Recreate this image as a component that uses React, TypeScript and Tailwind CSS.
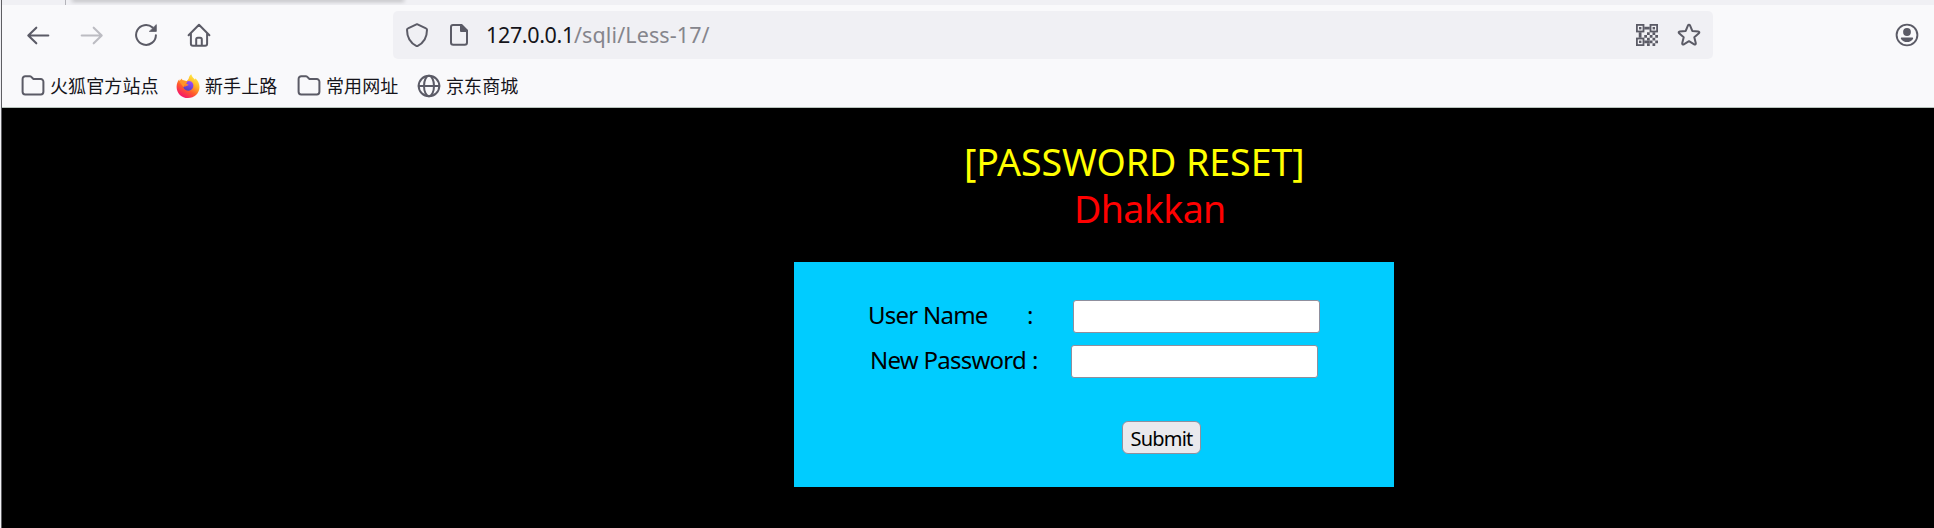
import React from "react";

const stroke = {
  fill: "none",
  stroke: "#5b5b66",
  strokeWidth: 2,
  strokeLinecap: "round" as const,
  strokeLinejoin: "round" as const,
};

function Back() {
  return (
    <svg width="24" height="24" viewBox="0 0 24 24" {...stroke} strokeWidth={2.1}>
      <path d="M22.3 12.5H2.5M10.3 4.7 2.3 12.5l8 7.8" />
    </svg>
  );
}

function Forward() {
  return (
    <svg width="24" height="24" viewBox="0 0 24 24" {...stroke} stroke="#bcbcc2" strokeWidth={2.1}>
      <path d="M1.7 12.5h19.8M13.7 4.7l8 7.8-8 7.8" />
    </svg>
  );
}

function Reload() {
  return (
    <svg width="24" height="24" viewBox="0 0 24 24" {...stroke}>
      <path d="M18.6 4.6A9.9 9.9 0 1 0 21.9 12.2" />
      <path d="M22.3 2v6.4h-6.6z" fill="#5b5b66" strokeWidth={0.8} />
    </svg>
  );
}

function Home() {
  return (
    <svg width="24" height="24" viewBox="0 0 24 24" {...stroke}>
      <path d="M1.6 12.2 12 1.8l10.4 10.4M3.9 10v10.8a2 2 0 0 0 2 2h12.2a2 2 0 0 0 2-2V10M9.2 22.6v-6.2a1.6 1.6 0 0 1 1.6-1.6h2.4a1.6 1.6 0 0 1 1.6 1.6v6.2" />
    </svg>
  );
}

function Shield() {
  return (
    <svg width="24" height="24" viewBox="0 0 24 24" {...stroke}>
      <path d="M12 1.2 21 5.3c.7.3 1 .8 1 1.5C22 14.2 18.8 20.2 12 23.3 5.2 20.2 2 14.2 2 6.8c0-.7.3-1.2 1-1.5z" />
    </svg>
  );
}

function Page() {
  return (
    <svg width="20" height="24" viewBox="0 0 20 24" {...stroke}>
      <path d="M4 2h8.5l5.5 5.5V19.5a2.3 2.3 0 0 1-2.3 2.3H4.3A2.3 2.3 0 0 1 2 19.5V4a2 2 0 0 1 2-2z" />
      <path d="M12 2v6h6z" fill="#5b5b66" />
    </svg>
  );
}

const checks = [
  [4, 3], [6, 3], [3, 4], [5, 4], [7, 4], [4, 5], [6, 5],
  [3, 6], [5, 6], [7, 6], [4, 7], [6, 7], [4, 6], [3, 1], [4, 1], [1, 3], [1, 4],
];

const finders = [
  [0, 0], [13.6, 0], [0, 13.6],
];

function QrCode() {
  return (
    <svg width="22" height="22" viewBox="0 0 22 22">
      {checks.map(([x, y]) => (
        <rect key={`${x}-${y}`} x={x * 2.75} y={y * 2.75} width="2.75" height="2.75" fill="#5b5b66" />
      ))}
      {finders.map(([x, y]) => (
        <g key={`${x}-${y}`}>
          <rect x={x + 0.9} y={y + 0.9} width="6.6" height="6.6" fill="#f0f0f4" stroke="#5b5b66" strokeWidth="1.8" />
          <rect x={x + 3} y={y + 3} width="2.4" height="2.4" fill="#5b5b66" />
        </g>
      ))}
    </svg>
  );
}

function Star() {
  return (
    <svg width="24" height="24" viewBox="0 0 24 24" {...stroke}>
      <path d="M11 2.3c.4-.9 1.6-.9 2 0l2.3 5.6 6 .5c1 .1 1.4 1.2.6 1.9l-4.6 3.9 1.5 6c.2 1-.8 1.7-1.6 1.2L12 18.2l-5.2 3.2c-.8.5-1.8-.2-1.6-1.2l1.5-6-4.6-3.9c-.8-.7-.4-1.8.6-1.9l6-.5z" />
    </svg>
  );
}

function Account() {
  return (
    <svg width="24" height="24" viewBox="0 0 24 24">
      <circle cx="12" cy="12" r="10.4" fill="none" stroke="#5b5b66" strokeWidth="1.9" />
      <circle cx="12" cy="9" r="3.9" fill="#5b5b66" />
      <path d="M6.8 14.5h10.4c.8 0 1.2.7.8 1.4-1.3 2-3.5 3.2-6 3.2s-4.7-1.2-6-3.2c-.4-.7 0-1.4.8-1.4z" fill="#5b5b66" />
    </svg>
  );
}

function Folder() {
  return (
    <svg width="24" height="24" viewBox="0 0 24 24" {...stroke}>
      <path d="M4.2 2.3h4.6c.6 0 1.1.2 1.5.6l1.6 1.6c.4.4.9.6 1.5.6h6.4a2.6 2.6 0 0 1 2.6 2.6v10.1a2.6 2.6 0 0 1-2.6 2.6H4.2a2.6 2.6 0 0 1-2.6-2.6V4.9a2.6 2.6 0 0 1 2.6-2.6z" />
    </svg>
  );
}

function Globe() {
  return (
    <svg width="24" height="24" viewBox="0 0 24 24" {...stroke}>
      <circle cx="12" cy="12" r="10.3" />
      <ellipse cx="12" cy="12" rx="5" ry="10.3" />
      <path d="M1.7 12h20.6" />
    </svg>
  );
}

function Firefox() {
  return (
    <svg width="24" height="24" viewBox="0 0 24 24">
      <defs>
        <linearGradient id="flame" x1="0.8" y1="0.05" x2="0.25" y2="0.95">
          <stop offset="0" stopColor="#fff04a" />
          <stop offset="0.35" stopColor="#ffb224" />
          <stop offset="0.65" stopColor="#ff5a2c" />
          <stop offset="1" stopColor="#f5156c" />
        </linearGradient>
        <linearGradient id="orb" x1="0.7" y1="0" x2="0.3" y2="1">
          <stop offset="0" stopColor="#a04bff" />
          <stop offset="1" stopColor="#4a3fc0" />
        </linearGradient>
      </defs>
      <path d="M15.3.3c.5 2.4 2 3.6 3.5 5.2.4-.2.5-.7.4-1.2C22 6.5 23.6 10 23.5 13.2 23.3 19.4 18.3 24 12 24 5.6 24 .6 19.1.6 12.9c0-3 1-5.7 2.7-7.6 0 .8.1 1.3.4 1.8C4.3 6 5.1 5.1 6 4.6c0 .9.3 1.6.8 2 1.5-.4 2.8-.2 3.9.5 1-.8 1.7-1.5 2-2.5.3-1.8 1.2-3.3 2.6-4.3z" fill="url(#flame)" />
      <path d="M11 7.4c1.3-.8 3.3-.7 4.6.4 1.7 1.4 2.2 3.4 1.5 5.5-.8 2.2-2.7 3.5-5 3.5-2.8 0-4.9-2-5-4.7 1 .8 2.3.7 3.3 0 .8-.5 1.8-.5 2.2-1 .2-.7-.8-1-2-1.2-.6-.8-.5-1.7.4-2.5z" fill="url(#orb)" />
      <path d="M3.4 7.6c1.8-1.4 4-1.7 5.6-.4.6.5 1.5.5 2.3.5-.2 1.2-1.8 1.7-2 2.9-1.2.5-1.7 1.6-1.3 2.9-1.6-1.6-2.8-3.5-4.6-5.9z" fill="#ff9428" />
    </svg>
  );
}

function Bookmark({ icon, label, className }: { icon: React.ReactNode; label: string; className: string }) {
  return (
    <a className={`flex shrink-0 items-center gap-[5px] ${className}`}>
      {icon}
      <span className="text-[18px] leading-6 tracking-[0.1px] whitespace-nowrap text-[#15141a]">{label}</span>
    </a>
  );
}

function Toolbar() {
  return (
    <div className="flex h-[60px] items-center">
      <div className="flex w-[391px] shrink-0 items-center gap-[30px] pb-px pl-[24px]">
        <Back />
        <Forward />
        <Reload />
        <div className="-ml-px">
          <Home />
        </div>
      </div>
      <div className="flex h-12 w-[1320px] shrink-0 items-center rounded-[5px] bg-[#f0f0f4] pl-3">
        <Shield />
        <div className="ml-5 flex">
          <Page />
        </div>
        <div className="ml-[17px] text-[21.5px] leading-8 tracking-[0.12px] text-[#85858c]">
          <span className="tracking-[-0.35px] text-[#15141a]">127.0.0.1</span>/sqli/Less-17/
        </div>
        <div className="mr-3 ml-auto flex items-center gap-[19px]">
          <QrCode />
          <Star />
        </div>
      </div>
      <div className="ml-[182px] flex">
        <Account />
      </div>
    </div>
  );
}

function Bookmarks() {
  return (
    <div className="flex h-[42px] items-center pl-[19px]">
      <Bookmark className="w-[155px]" icon={<Folder />} label="火狐官方站点" />
      <Bookmark className="w-[121px]" icon={<Firefox />} label="新手上路" />
      <Bookmark className="w-[120px]" icon={<Folder />} label="常用网址" />
      <Bookmark className="w-[120px]" icon={<Globe />} label="京东商城" />
    </div>
  );
}

export default function App() {
  return (
    <div className="flex h-[528px] w-[1934px] overflow-hidden bg-black font-['Noto_Sans','Noto_Sans_CJK_SC',sans-serif]">
      <div className="w-[2px] shrink-0 border-r border-[#5f5f63] bg-[#f0f0f4]" />
      <div className="flex min-w-0 flex-1 flex-col">
        <div className="flex h-[5px] shrink-0 overflow-hidden bg-[#f0f0f4]">
          <div className="w-[64px] border-r border-[#b4b4ba]" />
          <div className="ml-[7px] h-0 w-[330px] rounded-b-md shadow-[0_0_4px_1px_rgba(0,0,0,0.4)]" />
        </div>
        <header className="h-[103px] shrink-0 border-b border-[#b9c4bd] bg-[#f9f9fb]">
          <Toolbar />
          <Bookmarks />
        </header>
        <main className="flex flex-1 flex-col bg-black">
          <div className="flex h-[154px] flex-col pt-[30px] text-[37.5px] leading-[47px] whitespace-nowrap">
            <h1 className="pl-[962px] tracking-[-0.05px] text-[#ffff00]">[PASSWORD RESET]</h1>
            <h2 className="pl-[1072px] tracking-[-0.6px] text-[#ff0000]">Dhakkan</h2>
          </div>
          <form className="ml-[792px] h-[225px] w-[600px] bg-[#00ccff] pt-[38px] text-[24px] whitespace-nowrap text-black">
            <div className="flex h-[33px] items-center pl-[74px]">
              <label className="w-[159px] pb-[3px] tracking-[-0.75px]">User Name</label>
              <span className="w-[46px] pb-[3px]">:</span>
              <input className="h-[33px] w-[247px] rounded-[3px] border border-[#8f8f9d] bg-white" />
            </div>
            <div className="mt-3 flex h-[33px] items-center pl-[76px]">
              <label className="w-[162px] pb-[3px] tracking-[-0.75px]">New Password</label>
              <span className="w-[39px] pb-[3px]">:</span>
              <input type="password" className="h-[33px] w-[247px] rounded-[3px] border border-[#8f8f9d] bg-white" />
            </div>
            <button type="button" className="mt-[43px] ml-[328px] flex h-[33px] w-[79px] items-center justify-center rounded-[6px] border border-[#8f8f9d] bg-[#e9e9ed] pt-[2px] text-[20px] tracking-[-0.8px]">
              Submit
            </button>
          </form>
        </main>
      </div>
    </div>
  );
}
